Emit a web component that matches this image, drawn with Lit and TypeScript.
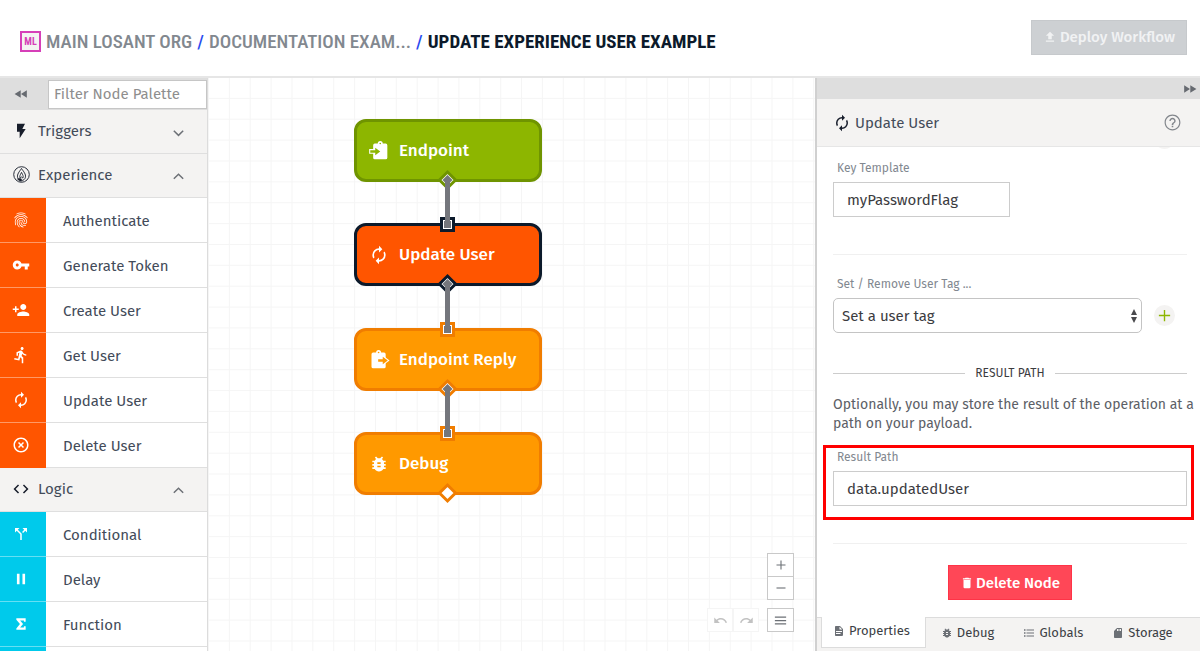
import { LitElement, html, svg, css, nothing } from "lit";
import { customElement, property, state } from "lit/decorators.js";
import { classMap } from "lit/directives/class-map.js";
import { styleMap } from "lit/directives/style-map.js";

/* Icon outlines on a 24 × 24 grid. */
const ICONS: Record<string, string> = {
  autorenew:
    "M12,6V9L16,5L12,1V4A8,8 0 0,0 4,12C4,13.57 4.46,15.03 5.24,16.26L6.7,14.8C6.25,13.97 6,13 6,12A6,6 0 0,1 12,6M18.76,7.74L17.3,9.2C17.74,10.04 18,11 18,12A6,6 0 0,1 12,18V15L8,19L12,23V20A8,8 0 0,0 20,12C20,10.43 19.54,8.97 18.76,7.74Z",
  bug: "M14,12H10V10H14M14,16H10V14H14M20,8H17.19C16.74,7.22 16.12,6.55 15.37,6.04L17,4.41L15.59,3L13.42,5.17C12.96,5.06 12.5,5 12,5C11.5,5 11.04,5.06 10.59,5.17L8.41,3L7,4.41L8.62,6.04C7.88,6.55 7.26,7.22 6.81,8H4V10H6.09C6.04,10.33 6,10.66 6,11V12H4V14H6V15C6,15.34 6.04,15.67 6.09,16H4V18H6.81C7.85,19.79 9.78,21 12,21C14.22,21 16.15,19.79 17.19,18H20V16H17.91C17.96,15.67 18,15.34 18,15V14H20V12H18V11C18,10.66 17.96,10.33 17.91,10H20V8Z",
  key: "M12.65 10C11.83 7.67 9.61 6 7 6c-3.31 0-6 2.69-6 6s2.69 6 6 6c2.61 0 4.83-1.67 5.65-4H17v4h4v-4h2v-4H12.65zM7 14c-1.1 0-2-.9-2-2s.9-2 2-2 2 .9 2 2-.9 2-2 2z",
  personAdd:
    "M15 12c2.21 0 4-1.79 4-4s-1.79-4-4-4-4 1.79-4 4 1.79 4 4 4zm-9-2V7H4v3H1v2h3v3h2v-3h3v-2H6zm9 4c-2.67 0-8 1.34-8 4v2h16v-2c0-2.66-5.33-4-8-4z",
  run: "M13.49 5.48c1.1 0 2-.9 2-2s-.9-2-2-2-2 .9-2 2 .9 2 2 2zm-3.6 13.9l1-4.4 2.1 2v6h2v-7.5l-2.1-2 .6-3c1.3 1.5 3.3 2.5 5.5 2.5v-2c-1.9 0-3.5-1-4.3-2.4l-1-1.6c-.4-.6-1-1-1.7-1-.3 0-.5.1-.8.1l-5.2 2.2v4.7h2v-3.4l1.8-.7-1.6 8.1-4.9-1-.4 2 7 1.4z",
  closeCircle:
    "M12,20C7.59,20 4,16.41 4,12C4,7.59 7.59,4 12,4C16.41,4 20,7.59 20,12C20,16.41 16.41,20 12,20M12,2C6.47,2 2,6.47 2,12C2,17.53 6.47,22 12,22C17.53,22 22,17.53 22,12C22,6.47 17.53,2 12,2M14.59,8L12,10.59L9.41,8L8,9.41L10.59,12L8,14.59L9.41,16L12,13.41L14.59,16L16,14.59L13.41,12L16,9.41L14.59,8Z",
  split:
    "M14 4l2.29 2.29-2.88 2.88 1.42 1.42 2.88-2.88L20 10V4zm-4 0H4v6l2.29-2.29 4.71 4.7V20h2v-8.41l-5.29-5.3z",
  pause: "M5,3H9.5V21H5V3M14.5,3H19V21H14.5V3Z",
  sigma: "M20,2V8H17V6H10.5L15.5,12L10.5,18H17V16H20V22H4V19.500L10.2,12L4,4.500V2H20Z",
  flash: "M6,1V13H10V23L19,9H14L18,1H6Z",
  code: "M9.4 16.6L4.8 12l4.6-4.6L8 6l-6 6 6 6 1.4-1.4zm5.2 0l4.6-4.6-4.6-4.6L16 6l6 6-6 6-1.4-1.4z",
  fingerprint:
    "M17.81 4.47c-.08 0-.16-.02-.23-.06C15.66 3.42 14 3 12.01 3c-1.98 0-3.86.47-5.57 1.41-.24.13-.54.04-.68-.2-.13-.24-.04-.55.2-.68C7.82 2.52 9.86 2 12.01 2c2.13 0 3.99.47 6.03 1.52.25.13.34.43.21.67-.09.18-.26.28-.44.28zM3.5 9.72c-.1 0-.2-.03-.29-.09-.23-.16-.28-.47-.12-.7.99-1.4 2.25-2.5 3.75-3.27C9.98 4.04 14 4.03 17.15 5.65c1.5.77 2.76 1.86 3.75 3.25.16.22.11.54-.12.7-.23.16-.54.11-.7-.12-.9-1.26-2.04-2.25-3.39-2.94-2.87-1.47-6.54-1.47-9.4.01-1.36.7-2.5 1.7-3.4 2.96-.08.14-.23.21-.39.21zm6.25 12.07c-.13 0-.26-.05-.35-.15-.87-.87-1.34-1.43-2.01-2.64-.69-1.23-1.05-2.73-1.05-4.34 0-2.97 2.54-5.39 5.66-5.39s5.66 2.42 5.66 5.39c0 .28-.22.5-.5.5s-.5-.22-.5-.5c0-2.42-2.09-4.39-4.66-4.39-2.57 0-4.66 1.97-4.66 4.39 0 1.44.32 2.77.93 3.85.64 1.15 1.08 1.64 1.85 2.42.19.2.19.51 0 .71-.11.1-.24.15-.37.15zm7.17-1.85c-1.19 0-2.24-.3-3.1-.89-1.49-1.01-2.38-2.65-2.38-4.39 0-.28.22-.5.5-.5s.5.22.5.5c0 1.41.72 2.74 1.94 3.56.71.48 1.54.71 2.54.71.24 0 .64-.03 1.04-.1.27-.05.53.13.58.41.05.27-.13.53-.41.58-.57.11-1.07.12-1.21.12zM14.91 22c-.04 0-.09-.01-.13-.02-1.59-.44-2.63-1.03-3.72-2.1-1.4-1.39-2.17-3.24-2.17-5.22 0-1.62 1.38-2.94 3.08-2.94 1.7 0 3.08 1.32 3.08 2.94 0 1.07.93 1.94 2.08 1.94s2.08-.87 2.08-1.94c0-3.77-3.25-6.83-7.25-6.83-2.84 0-5.44 1.58-6.61 4.03-.39.81-.59 1.76-.59 2.8 0 .78.07 2.01.67 3.61.1.26-.03.55-.29.64-.26.1-.55-.04-.64-.29-.49-1.31-.73-2.61-.73-3.96 0-1.2.23-2.29.68-3.24 1.33-2.79 4.28-4.6 7.51-4.6 4.55 0 8.25 3.51 8.25 7.83 0 1.62-1.38 2.94-3.08 2.94s-3.08-1.32-3.08-2.94c0-1.07-.93-1.94-2.08-1.94s-2.08.87-2.08 1.94c0 1.71.66 3.31 1.87 4.51.95.94 1.86 1.46 3.27 1.85.27.07.42.35.35.61-.05.23-.26.38-.47.38z",
  undo: "M12.5 8c-2.65 0-5.05.99-6.9 2.6L2 7v9h9l-3.62-3.62c1.39-1.16 3.16-1.88 5.12-1.88 3.54 0 6.55 2.31 7.6 5.5l2.37-.78C21.08 11.03 17.15 8 12.5 8z",
  redo: "M18.4 10.6C16.55 8.99 14.15 8 11.5 8c-4.65 0-8.58 3.03-9.96 7.22L3.9 16c1.05-3.19 4.05-5.5 7.6-5.5 1.95 0 3.73.72 5.12 1.88L13 16h9V7l-3.6 3.6z",
  document:
    "M13,9H18.5L13,3.5V9M6,2H14L20,8V20A2,2 0 0,1 18,22H6C4.89,22 4,21.1 4,20V4C4,2.89 4.89,2 6,2M15,18V16H6V18H15M18,14V12H6V14H18Z",
  list: "M7,5H22V7H7V5M7,13V11H22V13H7M2,4.5H5V7.5H2V4.5M2,10.5H5V13.5H2V10.5M7,19V17H22V19H7M2,16.5H5V19.5H2V16.5Z",
  storage:
    "M18 2h-8L4.02 8 4 20c0 1.1.9 2 2 2h12c1.1 0 2-.9 2-2V4c0-1.1-.9-2-2-2zm-6 6h-2V4h2v4zm3 0h-2V4h2v4zm3 0h-2V4h2v4z",
  trash: "M19,4H15.5L14.5,3H9.5L8.5,4H5V6H19M6,19A2,2 0 0,0 8,21H16A2,2 0 0,0 18,19V7H6V19Z",
  help: "M11 18h2v-2h-2v2zm1-16C6.48 2 2 6.48 2 12s4.48 10 10 10 10-4.48 10-10S17.52 2 12 2zm0 18.5c-4.7 0-8.5-3.8-8.5-8.5S7.3 3.500 12 3.500s8.500 3.800 8.500 8.500-3.800 8.500-8.500 8.500zm0-14.500c-2.21 0-4 1.79-4 4h1.800c0-1.2 1-2.200 2.200-2.200s2.200 1 2.200 2.200c0 2-3.200 1.750-3.200 5h2c0-2.250 3-2.500 3-5 0-2.210-1.790-4-4-4z",
  upload: "M9,16V10H5L12,3L19,10H15V16H9M5,20V18H19V20H5Z",
  rewind: "M12 12L22 5.500V18.500ZM1 12L11.500 5.500V18.500Z",
  forward: "M12 12L2 5.500V18.500ZM23 12L12.500 5.500V18.500Z",
  down: "M4.300 7.700L12 15.400 19.700 7.700 21.600 9.600 12 19.200 2.400 9.600Z",
  up: "M4.300 17.300L12 9.600 19.700 17.300 21.600 15.400 12 5.800 2.400 15.400Z",
  plus: "M10.900 3H13.100V10.900H21V13.100H13.100V21H10.900V13.100H3V10.900H10.900Z",
  minus: "M3 10.900H21V13.100H3Z",
  menu: "M3 5.500H21V7.500H3ZM3 11H21V13H3ZM3 16.500H21V18.500H3Z",
};

/* Clipboards with an arrow cut out of them: [board, arrow]. */
const CLIPBOARDS: Record<string, [string, string]> = {
  endpoint: [
    "M7 3H10.500A3 3 0 0 1 16.500 3H20Q22 3 22 5V20Q22 22 20 22H7Q5 22 5 20V5Q5 3 7 3Z",
    "M1.500 11H7.500V8L13.500 12.500 7.500 17V14H1.500Z",
  ],
  reply: [
    "M5 3H8.500A3 3 0 0 1 14.500 3H18Q20 3 20 5V20Q20 22 18 22H5Q3 22 3 20V5Q3 3 5 3Z",
    "M11 11H16.500V8L22.500 12.500 16.500 17V14H11Z",
  ],
};

@customElement("ui-icon")
class UiIcon extends LitElement {
  static styles = css`
    :host {
      display: inline-flex;
      flex: none;
    }
    .glyph {
      display: block;
      overflow: visible;
      fill: currentColor;
    }
  `;
  @property() name = "";
  @property({ type: Number }) size = 18;

  private shape() {
    if (this.name === "experience") {
      return svg`<g fill="none" stroke="currentColor"><circle cx="12" cy="12" r="11" stroke-width="1.300"/>
        <path d="M12 3.500C9 8 5.500 11.500 6.500 16 7.300 19 9.500 20.500 12 20.500S16.700 19 17.500 16C18.500 11.500 15 8 12 3.500Z" stroke-width="1.300"/>
        <path d="M12 9C10 13 9 14.500 10 17L12 15.500 14 17C15 14.500 14 13 12 9Z" stroke-width="1.200"/>
        <path d="M6.500 18.500Q9 17 12 18.500 10.500 20.800 12 21.500 8.500 21.500 6.500 18.500Z" fill="currentColor"/></g>`;
    }
    const clip = CLIPBOARDS[this.name];
    if (clip) {
      return svg`<mask id="cut" maskUnits="userSpaceOnUse" x="-2" y="-2" width="28" height="28">
          <path d=${clip[0]} fill="#fff"/>
          <path d=${clip[1]} fill="#fff" stroke="#fff" stroke-width="2.600"/>
          <path d=${clip[1]} fill="#000"/>
          <circle cx=${this.name === "endpoint" ? 13.5 : 11.5} cy="3" r="1" fill="#000"/>
        </mask>
        <rect x="-2" y="-2" width="28" height="28" mask="url(#cut)"/>`;
    }
    return svg`<path fill-rule="evenodd" d=${ICONS[this.name] ?? ""}/>`;
  }

  render() {
    return html`<svg class="glyph" width=${this.size} height=${this.size} viewBox="0 0 24 24" aria-hidden="true">
      ${this.shape()}
    </svg>`;
  }
}

interface PaletteGroup {
  label: string;
  icon: string;
  iconSize: number;
  tone: string;
  open: boolean;
  items: [string, string][];
}

@customElement("node-palette")
class NodePalette extends LitElement {
  static styles = css`
    :host {
      display: block;
      overflow: hidden;
      background: #fff;
      border-right: 1px solid #dcdcdc;
    }
    .filter {
      display: flex;
      align-items: center;
      height: 32px;
      background: #dedede;
    }
    button {
      font: inherit;
      color: inherit;
      border: 0;
      padding: 0;
      background: none;
      text-align: left;
    }
    .collapse {
      display: flex;
      width: 48px;
      padding-left: 14px;
      box-sizing: border-box;
      color: #666a70;
    }
    .search {
      flex: 1;
      min-width: 0;
      height: 29px;
      box-sizing: border-box;
      border: 1px solid #c6c6c6;
      border-radius: 0;
      padding: 0 5px;
      background: #fff;
      font: inherit;
      color: #4a505a;
      outline: none;
    }
    .search::placeholder {
      color: #8e8e8e;
      opacity: 1;
    }
    .group {
      display: grid;
      grid-template-columns: 38px 1fr 16px;
      align-items: center;
      width: 100%;
      height: 44px;
      padding: 0 19px 2px 0;
      box-sizing: border-box;
      background: #f4f3f2;
      border-bottom: 1px solid #dfdfdf;
    }
    .lead {
      display: flex;
      justify-content: center;
      width: 42px;
      color: #171d2b;
    }
    .chevron {
      padding-top: 3px;
      color: #6c7076;
    }
    .items {
      list-style: none;
      margin: 0;
      padding: 0;
    }
    .item {
      display: flex;
      width: 100%;
      height: 45px;
      cursor: grab;
    }
    .swatch {
      display: flex;
      align-items: center;
      justify-content: center;
      width: 46px;
      padding-right: 4px;
      box-sizing: border-box;
      color: #fff;
      border-bottom: 1px solid #ffffff66;
    }
    .experience {
      background: #ff5500;
    }
    .logic {
      background: #00caeb;
    }
    .item:last-child .swatch {
      border-bottom-color: transparent;
    }
    .name {
      display: flex;
      align-items: center;
      flex: 1;
      padding: 2px 0 0 17px;
      border-bottom: 1px solid #dfdfdf;
    }
  `;

  @state() groups: PaletteGroup[] = [
    { label: "Triggers", icon: "flash", iconSize: 16, tone: "", open: false, items: [] },
    {
      label: "Experience",
      icon: "experience",
      iconSize: 17,
      tone: "experience",
      open: true,
      items: [
        ["fingerprint", "Authenticate"],
        ["key", "Generate Token"],
        ["personAdd", "Create User"],
        ["run", "Get User"],
        ["autorenew", "Update User"],
        ["closeCircle", "Delete User"],
      ],
    },
    {
      label: "Logic",
      icon: "code",
      iconSize: 18,
      tone: "logic",
      open: true,
      items: [
        ["split", "Conditional"],
        ["pause", "Delay"],
        ["sigma", "Function"],
        ["", ""],
      ],
    },
  ];

  private toggle(group: PaletteGroup) {
    this.groups = this.groups.map((g) => (g === group ? { ...g, open: !g.open } : g));
  }

  private iconSize(icon: string) {
    return icon === "pause" || icon === "sigma" ? 14 : 18;
  }

  render() {
    return html`
      <div class="filter">
        <button class="collapse" aria-label="Collapse palette"><ui-icon name="rewind" size="14"></ui-icon></button>
        <input class="search" type="search" placeholder="Filter Node Palette" aria-label="Filter Node Palette" />
      </div>
      ${this.groups.map(
        (g) => html`
          <button class="group" aria-expanded=${g.open} @click=${() => this.toggle(g)}>
            <span class="lead"><ui-icon name=${g.icon} size=${g.iconSize}></ui-icon></span>
            <span>${g.label}</span>
            <ui-icon class="chevron" name=${g.open ? "up" : "down"} size="13"></ui-icon>
          </button>
          ${g.open
            ? html`<ul class="items">
                ${g.items.map(
                  ([icon, label]) => html`<li class="item">
                    <span class=${classMap({ swatch: true, [g.tone]: true })}>
                      <ui-icon name=${icon} size=${this.iconSize(icon)}></ui-icon>
                    </span>
                    <span class="name">${label}</span>
                  </li>`
                )}
              </ul>`
            : nothing}
        `
      )}
    `;
  }
}

interface FlowNode {
  label: string;
  icon: string;
  tone: string;
  x: number;
  y: number;
  input: boolean;
}

@customElement("flow-canvas")
class FlowCanvas extends LitElement {
  static styles = css`
    :host {
      display: block;
      position: relative;
      overflow: hidden;
      background: #fff;
    }
    .layer {
      position: absolute;
      inset: 0;
      width: 100%;
      height: 100%;
      pointer-events: none;
    }
    .gridline {
      fill: none;
      stroke: #f5f5f5;
      stroke-width: 1;
    }
    .green {
      background: #8db600;
      border-color: #6f9400;
      stroke: #6f9400;
    }
    .red {
      background: #ff5500;
      border-color: #0c1a2b;
      stroke: #0c1a2b;
    }
    .orange {
      background: #ff9900;
      border-color: #f07d00;
      stroke: #f07d00;
    }
    .node {
      position: absolute;
      display: flex;
      align-items: center;
      gap: 10px;
      width: 188px;
      height: 63px;
      box-sizing: border-box;
      padding: 0 12px;
      border-width: 3px;
      border-style: solid;
      border-radius: 12px;
      font: inherit;
      font-weight: 500;
      font-size: 17px;
      color: #fff;
      text-align: left;
      stroke: none;
    }
    .port {
      fill: #fff;
      stroke-width: 3;
    }
    .plug {
      fill: #74767c;
    }
    .wire {
      stroke: #74767c;
      stroke-width: 5;
    }
    .tools {
      position: absolute;
      right: 21px;
      bottom: 19px;
      display: flex;
      align-items: flex-end;
      gap: 8px;
      color: #6c7076;
    }
    .pair {
      display: flex;
    }
    .stack {
      display: flex;
      flex-direction: column;
      width: 27px;
    }
    .tool {
      display: flex;
      align-items: center;
      justify-content: center;
      height: 24px;
      box-sizing: border-box;
      padding: 0;
      color: inherit;
      background: #fff;
      border: 1px solid #c9c9c9;
    }
    .out {
      height: 23px;
      border-top: 0;
      margin-bottom: 8px;
    }
    .history {
      width: 26px;
      border-color: #f5f5f5;
      color: #c2c2c2;
    }
  `;

  nodes: FlowNode[] = [
    { label: "Endpoint", icon: "endpoint", tone: "green", x: 146, y: 41, input: false },
    { label: "Update User", icon: "autorenew", tone: "red", x: 146, y: 145, input: true },
    { label: "Endpoint Reply", icon: "reply", tone: "orange", x: 146, y: 250, input: true },
    { label: "Debug", icon: "bug", tone: "orange", x: 146, y: 354, input: true },
  ];

  render() {
    const last = this.nodes.length - 1;
    return html`
      <svg class="layer" aria-hidden="true">
        <pattern id="grid" width="20.87" height="20.87" patternUnits="userSpaceOnUse">
          <path class="gridline" d="M0.500 0V21M0 20.300H21" />
        </pattern>
        <rect width="100%" height="100%" fill="url(#grid)" />
      </svg>
      ${this.nodes.map(
        (n) => html`<button class="node ${n.tone}" style=${styleMap({ left: `${n.x}px`, top: `${n.y}px` })}>
          <ui-icon name=${n.icon} size="20"></ui-icon>${n.label}
        </button>`
      )}
      <svg class="layer" aria-hidden="true">
        ${this.nodes.map((n, i) => {
          const cx = n.x + 93.5;
          const cy = n.y + 61;
          return svg`
            <path class="port ${n.tone}" d="M${cx} ${cy - 8}l8 8-8 8-8-8z"/>
            ${i < last ? svg`<path class="plug" d="M${cx} ${cy - 5}l5 5-5 5-5-5z"/>` : nothing}
            ${n.input
              ? svg`<rect class="port ${n.tone}" x=${cx - 6} y=${n.y - 4.5} width="12" height="12"/>
                  <rect class="plug" x=${cx - 3.5} y=${n.y - 2} width="7" height="7"/>`
              : nothing}`;
        })}
        ${this.nodes.slice(0, last).map(
          (n, i) =>
            svg`<line class="wire" x1=${n.x + 93.5} y1=${n.y + 61} x2=${n.x + 93.5} y2=${this.nodes[i + 1].y + 2}/>`
        )}
      </svg>
      <div class="tools">
        <div class="pair">
          <button class="tool history" aria-label="Undo" disabled><ui-icon name="undo" size="15"></ui-icon></button>
          <button class="tool history" aria-label="Redo" disabled><ui-icon name="redo" size="15"></ui-icon></button>
        </div>
        <div class="stack">
          <button class="tool" aria-label="Zoom in"><ui-icon name="plus" size="12"></ui-icon></button>
          <button class="tool out" aria-label="Zoom out"><ui-icon name="minus" size="12"></ui-icon></button>
          <button class="tool" aria-label="Menu"><ui-icon name="menu" size="15"></ui-icon></button>
        </div>
      </div>
    `;
  }
}

@customElement("node-inspector")
class NodeInspector extends LitElement {
  static styles = css`
    :host {
      display: flex;
      flex-direction: column;
      min-height: 0;
      background: #fff;
      border-left: 2px solid #d0d0d0;
    }
    button {
      font: inherit;
      color: inherit;
      border: 0;
      padding: 0;
      background: none;
    }
    .bar {
      display: flex;
      justify-content: flex-end;
      align-items: center;
      height: 21px;
      padding-right: 3px;
      background: #dedede;
      color: #666a70;
    }
    .bar button {
      display: flex;
    }
    .head {
      display: flex;
      align-items: center;
      gap: 4px;
      height: 48px;
      box-sizing: border-box;
      padding: 0 18px 0 16px;
      background: #f4f3f2;
      border-bottom: 1px solid #e6e6e6;
    }
    .title {
      flex: 1;
      margin: 0;
      font: inherit;
    }
    .head > ui-icon {
      color: #171d2b;
    }
    .help {
      display: flex;
      color: #82868c;
    }
    .body {
      flex: 1;
      min-height: 0;
      overflow: hidden;
      padding: 0 13px 0 16px;
    }
    .add {
      display: flex;
      align-items: center;
      justify-content: center;
      width: 21px;
      height: 21px;
      border-radius: 50%;
      background: #f4f3f2;
      color: #8db600;
    }
    .previous {
      margin: -19px 12px 0 auto;
    }
    .label {
      display: block;
      padding-left: 4px;
      font-size: 12px;
      line-height: 16px;
      color: #828890;
    }
    .key {
      margin-top: 11px;
    }
    .text,
    .choice {
      display: block;
      box-sizing: border-box;
      width: 100%;
      height: 35px;
      border: 1px solid #cccccc;
      border-radius: 0;
      background: #fff;
      font: inherit;
      color: #3c3c3f;
      outline: none;
    }
    .text {
      margin-top: 6px;
      padding: 0 13px;
    }
    .short {
      width: 50%;
    }
    .rule {
      height: 1px;
      margin: 0;
      border: 0;
      background: #f0f0f0;
    }
    .after-key {
      margin-top: 37px;
      margin-bottom: 21px;
    }
    .row {
      display: flex;
      align-items: center;
      gap: 12px;
      margin-top: 6px;
      padding-right: 12px;
    }
    .select {
      flex: 1;
      display: grid;
      align-items: center;
    }
    .choice {
      grid-area: 1 / 1;
      appearance: none;
      padding: 0 8px;
      border-radius: 5px;
      border-color: #c4c4c4;
    }
    .arrows {
      grid-area: 1 / 1;
      justify-self: end;
      margin-right: 5px;
      fill: #4a4a4d;
      pointer-events: none;
    }
    .section {
      display: flex;
      align-items: center;
      gap: 10px;
      margin: 31px 0 0;
      font-size: 12px;
      font-weight: 400;
      line-height: 18px;
      color: #3c3c3f;
    }
    .section::before,
    .section::after {
      content: "";
      flex: 1;
      height: 1px;
      background: #cccccc;
    }
    .note {
      margin: 13px -8px 12px 0;
      font-size: 14px;
      line-height: 19px;
      color: #5c6066;
    }
    .marked {
      margin: 0 -7px 0 -10px;
      padding: 1px 4px 11px 7px;
      border: 3px solid #ff0000;
    }
    .after-result {
      margin-top: 23px;
    }
    .delete {
      display: flex;
      align-items: center;
      justify-content: center;
      gap: 2px;
      width: 124px;
      height: 35px;
      margin: 21px auto 0;
      background: #ff4757;
      border: 1px solid #ff3347;
      color: #fff;
      font-weight: 500;
    }
    .tabs {
      display: flex;
      height: 34px;
      box-sizing: border-box;
      padding-left: 4px;
      background: #f4f3f2;
      font-size: 13px;
      color: #3c3f45;
      box-shadow: inset 0 1px #dcdcdc;
    }
    .tab {
      display: flex;
      align-items: center;
      justify-content: center;
      gap: 4px;
      padding: 0 14px 3px 15px;
      white-space: nowrap;
    }
    .tab ui-icon {
      color: #6c7076;
    }
    .current {
      height: 31px;
      box-sizing: border-box;
      padding: 0 15px 2px 11px;
      background: #fff;
      border: 1px solid #dcdcdc;
      border-top: 0;
    }
  `;

  @state() tab = "Properties";

  render() {
    const tabs: [string, string][] = [
      ["Properties", "document"],
      ["Debug", "bug"],
      ["Globals", "list"],
      ["Storage", "storage"],
    ];
    return html`
      <div class="bar">
        <button aria-label="Collapse panel"><ui-icon name="forward" size="14"></ui-icon></button>
      </div>
      <header class="head">
        <ui-icon name="autorenew" size="18"></ui-icon>
        <h2 class="title">Update User</h2>
        <button class="help" aria-label="Help"><ui-icon name="help" size="19"></ui-icon></button>
      </header>
      <div class="body">
        <button class="add previous" aria-label="Add key"></button>
        <label class="label key" for="key">Key Template</label>
        <input class="text short" id="key" value="myPasswordFlag" />
        <hr class="rule after-key" />
        <label class="label" for="tag">Set / Remove User Tag ...</label>
        <div class="row">
          <div class="select">
            <select class="choice" id="tag">
              <option>Set a user tag</option>
            </select>
            <svg class="arrows" width="6" height="14" viewBox="0 0 6 14" aria-hidden="true">
              <path d="M3 0L6 6H0ZM3 14L0 8H6Z" />
            </svg>
          </div>
          <button class="add" aria-label="Add tag"><ui-icon name="plus" size="15"></ui-icon></button>
        </div>
        <h3 class="section">RESULT PATH</h3>
        <p class="note">Optionally, you may store the result of the operation at a path on your payload.</p>
        <div class="marked">
          <label class="label" for="result">Result Path</label>
          <input class="text" id="result" value="data.updatedUser" />
        </div>
        <hr class="rule after-result" />
        <button class="delete"><ui-icon name="trash" size="14"></ui-icon>Delete Node</button>
      </div>
      <nav class="tabs" role="tablist">
        ${tabs.map(
          ([label, icon]) => html`<button
            class=${classMap({ tab: true, current: label === this.tab })}
            role="tab"
            aria-selected=${label === this.tab}
            @click=${() => (this.tab = label)}
          >
            <ui-icon name=${icon} size="12"></ui-icon>${label}
          </button>`
        )}
      </nav>
    `;
  }
}

@customElement("app-root")
class AppRoot extends LitElement {
  static styles = css`
    :host {
      display: grid;
      grid-template-rows: auto minmax(0, 1fr);
      height: 100vh;
      background: #fff;
      color: #434b59;
      font-family: "Fira Sans", "Noto Sans", sans-serif;
      font-size: 15px;
      line-height: 20px;
    }
    .top {
      display: flex;
      align-items: center;
      justify-content: space-between;
      gap: 20px;
      padding: 20px 13px 21px 20px;
      border-bottom: 2px solid #e6e6e6;
    }
    .crumbs {
      display: flex;
      align-items: center;
      min-width: 0;
      margin: 8px 0 0;
      padding: 0;
      list-style: none;
      font-family: "Roboto Condensed", "Open Sans Condensed", Roboto, sans-serif;
      font-size: 19px;
      font-weight: 700;
      line-height: 24px;
      white-space: nowrap;
    }
    .crumb {
      display: flex;
      align-items: center;
    }
    .crumb + .crumb::before {
      content: "/";
      margin: 0 5px;
      color: #2a4bef;
      font-weight: 500;
    }
    .link {
      color: #82888f;
      text-decoration: none;
      font-weight: 500;
    }
    .page {
      margin: 0;
      font: inherit;
      color: #0c1a2b;
    }
    .badge {
      display: grid;
      place-items: center;
      width: 21px;
      height: 21px;
      box-sizing: border-box;
      margin-right: 5px;
      border: 2px solid #d63fb8;
      background: #f4f3f2;
      color: #d63fb8;
      font-size: 10px;
      line-height: 10px;
    }
    .deploy {
      display: flex;
      align-items: center;
      justify-content: center;
      gap: 3px;
      width: 156px;
      height: 35px;
      border: 1px solid #c6c9cc;
      padding: 0 0 2px;
      box-sizing: border-box;
      background: #cdd0d3;
      color: #f1f2f3;
      font: inherit;
      font-weight: 500;
      font-size: 15px;
      white-space: nowrap;
    }
    .workspace {
      display: grid;
      grid-template-columns: 208px minmax(0, 1fr) 385px;
      min-height: 0;
    }
  `;

  render() {
    return html`
      <header class="top">
        <nav aria-label="Breadcrumb">
          <ol class="crumbs">
            <li class="crumb"><span class="badge" aria-hidden="true">ML</span><a class="link" href="#org">MAIN LOSANT ORG</a></li>
            <li class="crumb"><a class="link" href="#application">DOCUMENTATION EXAM...</a></li>
            <li class="crumb"><h1 class="page">UPDATE EXPERIENCE USER EXAMPLE</h1></li>
          </ol>
        </nav>
        <button class="deploy" disabled><ui-icon name="upload" size="14"></ui-icon>Deploy Workflow</button>
      </header>
      <main class="workspace">
        <node-palette></node-palette>
        <flow-canvas></flow-canvas>
        <node-inspector></node-inspector>
      </main>
    `;
  }
}
